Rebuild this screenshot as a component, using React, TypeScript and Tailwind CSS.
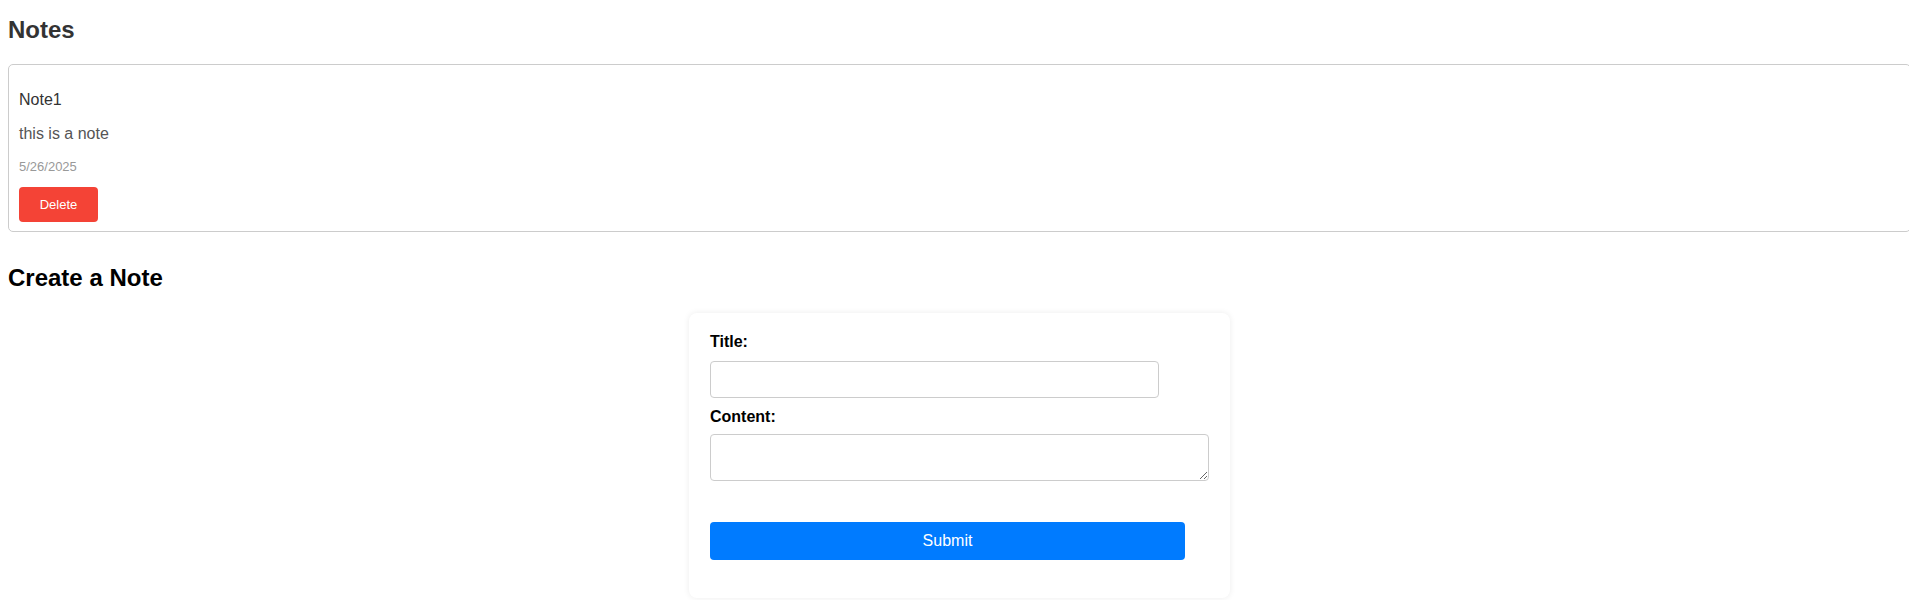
import React from "react";

export default function App() {
  return (
    <div className="overflow-x-hidden bg-white px-2 pt-[16px] pb-[2px] font-['Liberation_Sans',Arial,sans-serif]">
      <h2 className="text-[24px] font-bold leading-[28px] text-[#333]">Notes</h2>

      <div className="mt-[20px] w-[calc(100%+10px)] rounded-[5px] border border-[#ccc] px-[10px] pt-[10px] pb-[9px]">
        <p className="mt-4 text-[16px] leading-[18px] text-[#333]">Note1</p>
        <p className="mt-4 text-[16px] leading-[18px] text-[#555]">this is a note</p>
        <p className="mt-4 text-[13px] leading-[15px] text-[#999]">5/26/2025</p>
        <button className="mt-[13px] h-[35px] w-[79px] rounded-[4px] bg-[#f44336] text-center text-[13px] text-white">
          Delete
        </button>
      </div>

      <h2 className="mt-[32px] text-[24px] font-bold leading-[28px] text-black">Create a Note</h2>

      <div className="flex justify-center pl-[10px]">
        <form
          className="mt-[21px] w-[541px] rounded-[8px] bg-white pt-[20px] pb-[38px] pl-[21px] pr-[20px] shadow-[0_0_6px_rgba(0,0,0,0.08)]"
          onSubmit={(e) => e.preventDefault()}
        >
          <label className="block text-[16px] font-bold leading-[18px] text-black">Title:</label>
          <input
            type="text"
            className="mt-[10px] block h-[37px] w-[449px] rounded-[4px] border border-[#ccc] bg-white px-2 text-[16px] outline-none"
          />
          <label className="mt-[10px] block text-[16px] font-bold leading-[18px] text-black">Content:</label>
          <textarea className="mt-[8px] block h-[47px] w-[499px] rounded-[4px] border border-[#ccc] bg-white px-2 text-[16px] outline-none" />
          <button
            type="submit"
            className="mt-[41px] block h-[38px] w-[475px] rounded-[4px] bg-[#007bff] text-center text-[16px] text-white"
          >
            Submit
          </button>
        </form>
      </div>
    </div>
  );
}
